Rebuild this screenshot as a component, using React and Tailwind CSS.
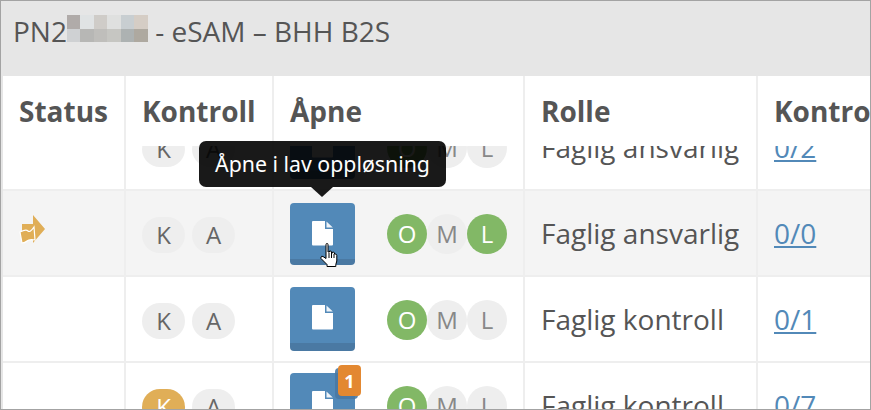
const FONT = "font-['Open_Sans',sans-serif]";
const top = ["#b0aba9", "#e0e3e4", "#cfccc8", "#dfe0df", "#c8ced1", "#d5cdc5"];
const bottom = ["#cfd1d3", "#b7b7b5", "#bfbebb", "#c6c6c2", "#adb2b2", "#aea9a0"];

function Doc() {
  return (
    <svg width="21" height="25" viewBox="0 0 21 25" className="block">
      <path d="M1 0H13V8H21V23.5Q21 24.5 20 24.5H1Q0 24.5 0 23.5V1Q0 0 1 0Z" fill="#fff" />
      <path d="M14.5 0.5L20.8 6.5H14.5Z" fill="#eef3f8" />
    </svg>
  );
}

function Pill({ children, active }) {
  return (
    <span className={`flex h-[36px] w-[43px] items-center justify-center rounded-full text-[24px] leading-none ${active ? "bg-[#e0ae57] text-white" : "bg-[#eeeeee] text-[#666666]"}`}>
      {children}
    </span>
  );
}

function Round({ children, on }) {
  return (
    <span className={`flex h-[40px] w-[40px] items-center justify-center rounded-full text-[24px] leading-none ${on ? "bg-[#82b866] text-white" : "bg-[#eeeeee] text-[#888888]"}`}>
      {children}
    </span>
  );
}

function Cursor() {
  return (
    <svg width="18" height="24" viewBox="0 0 18 24" className="absolute left-[30px] top-[40px]">
      <path d="M6 1.5Q6 0.5 7 0.5Q8 0.5 8 1.5V9H9.5V8Q11 7.5 11.5 9V10H12.5V9.2Q14 8.6 14.5 10V11H15.2Q16.8 11 16.8 12.5V18L15.8 21.5V23.5H7V21.5L1 15.5V14Q1.5 12.8 3 13.5L6 15.5Z" fill="#fff" stroke="#000" strokeWidth="1" />
      <path d="M9 10V15M11.5 10V15M14 11V15" stroke="#000" strokeWidth="1" />
    </svg>
  );
}

function Row({ bg, pressed, k, o, m, l, badge, role, link }) {
  return (
    <div className={`grid h-[86px] grid-cols-[123px_148px_251px_233px_1fr] border-b-2 border-[#eeeeee] ${bg}`}>
      <div className="flex border-r-2 border-[#eeeeee] pl-[16px] pt-[24px]">
        {pressed && (
          <svg width="28" height="29" viewBox="0 0 28 29" className="block">
            <path d="M3 9H14V0L26 14L14 28V23H3Z" fill="#e0ae57" />
            <path d="M1 17Q7 14 9 16T15 12L16 25Q10 24 8 26T3 28Z" fill="#e0ae57" stroke="#fff" strokeWidth="1.2" />
          </svg>
        )}
      </div>
      <div className="flex items-start gap-[7px] border-r-2 border-[#eeeeee] pl-[16px] pt-[26px]">
        <Pill active={k}>K</Pill>
        <Pill>A</Pill>
      </div>
      <div className="flex items-start border-r-2 border-[#eeeeee] pl-[16px]">
        <div className={`relative flex w-[65px] justify-center rounded-[4px] bg-[#5289b8] ${pressed ? "mt-[12px] h-[62px] border-b-[6px] pt-[18px]" : "mt-[10px] h-[64px] border-b-[8px] pt-[18px]"} border-[#4a79a3]`}>
          <Doc />
          {pressed && <Cursor />}
          {badge && (
            <span className="absolute -right-[6px] -top-[8px] flex h-[31px] w-[23px] items-center justify-center rounded-[4px] bg-[#e38831] text-[18px] font-bold leading-none text-white shadow-[-3px_3px_0_rgba(74,121,163,0.9)]">
              1
            </span>
          )}
        </div>
        <div className="ml-[32px] mt-[23px] flex">
          <Round on={o}>O</Round>
          <Round on={m}>M</Round>
          <Round on={l}>L</Round>
        </div>
      </div>
      <div className="border-r-2 border-[#eeeeee] pl-[16px] pt-[23px] text-[28px] leading-[38px] text-[#555555]">{role}</div>
      <div className="pl-[16px] pt-[23px] text-[28px] leading-[38px]">
        <a className="text-[#5289b8] underline">{link}</a>
      </div>
    </div>
  );
}

export default function App() {
  return (
    <div className={`relative h-[410px] w-[871px] overflow-hidden border border-[#a3a3a3] bg-white ${FONT}`}>
      <div className="h-full border-l-2 border-[#e6e6e6]">
        <div className="flex h-[75px] items-start bg-[#e6e6e6] pl-[10px] pt-[11px] text-[28px] leading-[38px] text-[#555555]">
          <span>PN2</span>
          <span className="mt-[3px] grid h-[27px] w-[81px] grid-cols-6">
            {[...top, ...bottom].map((c, i) => (
              <span key={i} className="block" style={{ backgroundColor: c }} />
            ))}
          </span>
          <span className="whitespace-pre"> - eSAM – BHH B2S</span>
        </div>

        <div className="relative z-10 grid h-[70px] grid-cols-[123px_148px_251px_233px_1fr] whitespace-nowrap bg-white text-[28px] font-bold leading-[38px] text-[#555555]">
          <div className="border-r-2 border-[#eeeeee] pl-[16px] pt-[16px]">Status</div>
          <div className="border-r-2 border-[#eeeeee] pl-[16px] pt-[16px]">Kontroll</div>
          <div className="border-r-2 border-[#eeeeee] pl-[16px] pt-[16px]">Åpne</div>
          <div className="border-r-2 border-[#eeeeee] pl-[16px] pt-[16px]">Rolle</div>
          <div className="pl-[16px] pt-[16px]">Kontrollert</div>
        </div>

        <div className="-mt-[41px]">
          <Row bg="bg-white" o role="Faglig ansvarlig" link="0/2" />
          <Row bg="bg-[#f4f4f4]" pressed o l role="Faglig ansvarlig" link="0/0" />
          <Row bg="bg-white" o role="Faglig kontroll" link="0/1" />
          <Row bg="bg-white" k o badge role="Faglig kontroll" link="0/7" />
        </div>
      </div>

      <div className="absolute left-[198px] top-[140px] z-20 flex h-[46px] w-[247px] items-center justify-center rounded-[7px] bg-black/90 font-['Noto_Sans',sans-serif] text-[21.3px] leading-none text-white">
        Åpne i lav oppløsning
        <span className="absolute left-[112px] top-[46px] h-0 w-0 border-l-[11px] border-r-[11px] border-t-[10px] border-l-transparent border-r-transparent border-t-black/90" />
      </div>
    </div>
  );
}
